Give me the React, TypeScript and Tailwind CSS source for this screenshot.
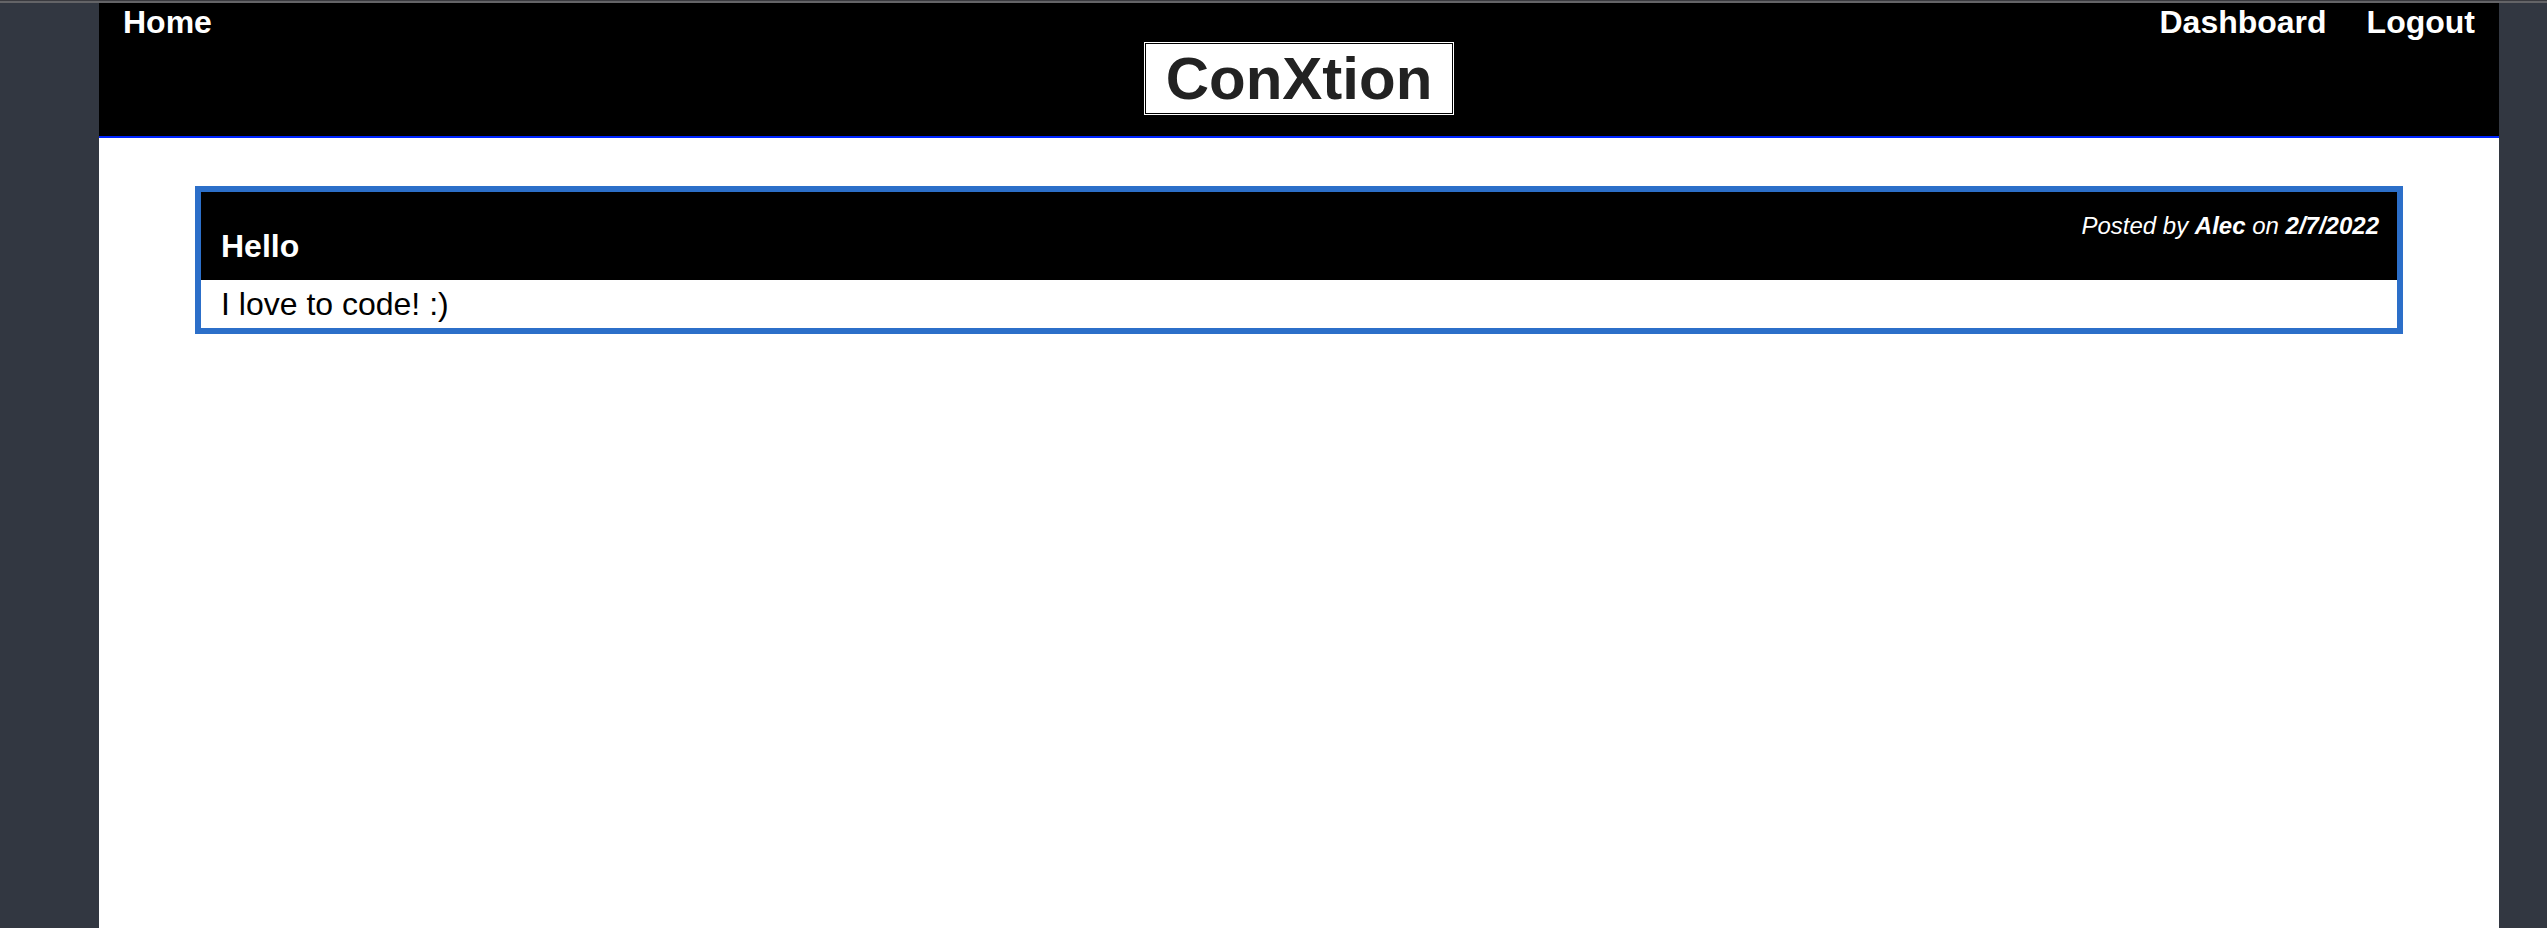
type Post = { title: string; body: string; author: string; date: string };

const posts: Post[] = [
  { title: "Hello", body: "I love to code! :)", author: "Alec", date: "2/7/2022" },
];

function Header() {
  return (
    <header className="flex flex-col items-center border-b-2 border-[#0026ff] bg-black pb-[21px]">
      <nav className="flex w-full justify-between px-6 text-[32px] leading-[39px] font-bold text-white">
        <a href="#home">Home</a>
        <div className="flex gap-10">
          <a href="#dashboard">Dashboard</a>
          <a href="#logout">Logout</a>
        </div>
      </nav>
      <h1 className="border border-white bg-black p-px">
        <span className="block bg-white px-5 text-[60px] leading-[69px] font-bold text-[#222222]">
          ConXtion
        </span>
      </h1>
    </header>
  );
}

function PostCard({ post }: { post: Post }) {
  return (
    <article className="border-6 border-[#2c6fc9] bg-white">
      <div className="flex items-start justify-between bg-black pt-5 pr-[18px] pb-4 pl-5 text-white">
        <h2 className="mt-4 text-[32px] leading-9 font-bold">{post.title}</h2>
        <p className="text-2xl leading-7 italic">
          Posted by <b>{post.author}</b> on <b>{post.date}</b>
        </p>
      </div>
      <p className="px-5 text-[32px] leading-[48px] text-black">{post.body}</p>
    </article>
  );
}

export default function App() {
  return (
    <div className="flex min-h-screen flex-col bg-[#323741] font-['Liberation_Sans',Arial,sans-serif]">
      <div className="border-t border-b-2 border-t-[#3a3a3f] border-b-[#646467]" />
      <div className="mr-12 ml-[99px] flex grow flex-col bg-white">
        <Header />
        <main className="flex flex-col gap-12 px-[4%] py-12">
          {posts.map((post) => (
            <PostCard key={post.title} post={post} />
          ))}
        </main>
      </div>
    </div>
  );
}
